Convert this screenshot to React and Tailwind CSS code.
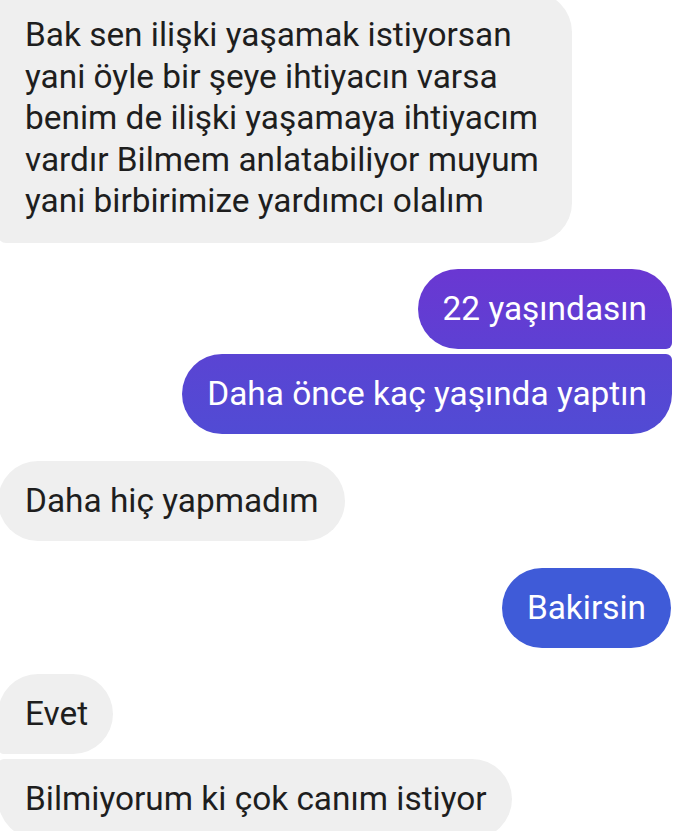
import React from 'react';

const FONT = { fontFamily: 'Roboto, "Noto Sans", sans-serif' };

function Incoming({ children, className = '' }) {
  return (
    <div className={`bg-[#efefef] text-[#1e1e1e] text-[33.4px] leading-[41.5px] ${className}`}>
      {children}
    </div>
  );
}

function Outgoing({ children, className = '' }) {
  return (
    <div className={`w-fit text-white text-[33.4px] leading-[41.5px] ${className}`}>
      {children}
    </div>
  );
}

export default function App() {
  return (
    <div className="h-[831px] overflow-hidden bg-white" style={FONT}>
      <div className="flex flex-col -mt-[8px]">
        <Incoming className="-ml-[2px] w-[574px] pl-[27px] pt-[22px] pb-[21px] rounded-r-[40px] rounded-bl-[8px]">
          Bak sen ilişki yaşamak istiyorsan<br />
          yani öyle bir şeye ihtiyacın varsa<br />
          benim de ilişki yaşamaya ihtiyacım<br />
          vardır Bilmem anlatabiliyor muyum<br />
          yani birbirimize yardımcı olalım
        </Incoming>

        <div className="flex flex-col items-end pr-[18px] mt-[26px] gap-[5px]">
          <Outgoing className="h-[80px] flex items-center px-[25px] rounded-l-[40px] rounded-tr-[40px] rounded-br-[6px] bg-linear-to-b from-[#6a37d2] to-[#5d40d3]">
            22 yaşındasın
          </Outgoing>
          <Outgoing className="h-[80px] flex items-center px-[25px] rounded-l-[40px] rounded-br-[40px] rounded-tr-[6px] bg-linear-to-b from-[#5a44d3] to-[#514bd4]">
            Daha önce kaç yaşında yaptın
          </Outgoing>
        </div>

        <Incoming className="w-fit -ml-[2px] mt-[27px] h-[80px] flex items-center px-[27px] rounded-[40px]">
          Daha hiç yapmadım
        </Incoming>

        <div className="flex justify-end pr-[19px] mt-[27px]">
          <Outgoing className="h-[80px] flex items-center px-[25px] rounded-[40px] bg-[#3f5bd8]">
            Bakirsin
          </Outgoing>
        </div>

        <div className="flex flex-col mt-[26px] gap-[5px]">
          <Incoming className="w-fit -ml-[2px] h-[80px] flex items-center pl-[27px] pr-[25px] rounded-r-[40px] rounded-tl-[40px] rounded-bl-[6px]">
            Evet
          </Incoming>
          <Incoming className="w-fit -ml-[2px] h-[80px] flex items-center pl-[27px] pr-[25px] rounded-r-[40px] rounded-bl-[40px] rounded-tl-[6px]">
            Bilmiyorum ki çok canım istiyor
          </Incoming>
        </div>
      </div>
    </div>
  );
}
